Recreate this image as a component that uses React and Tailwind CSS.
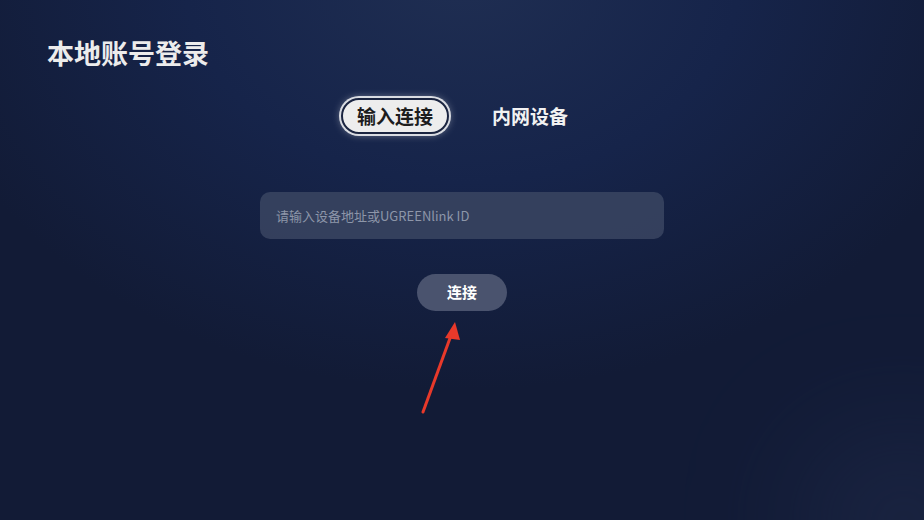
import React from "react";

const font = { fontFamily: '"Noto Sans CJK SC", "Noto Sans", sans-serif' };

function Arrow() {
  return (
    <svg className="absolute left-[415px] top-[318px]" width="50" height="100" viewBox="0 0 50 100">
      <line x1="8" y1="94" x2="38" y2="12" stroke="#e8392a" strokeWidth="3" strokeLinecap="round" />
      <polygon points="40,4 30,20 45,22" fill="#e8392a" />
    </svg>
  );
}

export default function App() {
  return (
    <div
      className="relative w-[924px] h-[520px] overflow-hidden bg-[#101a30] bg-[radial-gradient(ellipse_60%_80%_at_50%_-5%,#1f2e52_0%,#16244a_50%,#121b36_100%)]"
      style={font}
    >
      {/* soft glow in the lower right corner */}
      <div className="absolute right-[-80px] bottom-[-80px] w-[200px] h-[160px] rounded-full bg-[#2a3658] opacity-40 blur-3xl" />

      <div className="relative flex flex-col">
        <h1 className="pl-[47px] pt-[35px] text-[27px] leading-[36px] font-bold text-[#ececec]">本地账号登录</h1>

        {/* tabs */}
        <div className="mt-[27px] flex items-center justify-center gap-[43px] pr-[15px]">
          <div className="h-[36px] w-[108px] rounded-full bg-[#ededed] border-2 border-[#1a2440] ring-2 ring-white/80 shadow-[0_0_8px_rgba(255,255,255,0.5)] flex items-center justify-center text-[19px] font-bold text-[#1d1d1d]">
            输入连接
          </div>
          <div className="text-[19px] font-bold text-[#f2f2f2]">内网设备</div>
        </div>

        {/* address input */}
        <div className="mt-[58px] flex justify-center">
          <div className="w-[404px] h-[47px] rounded-[10px] bg-[#3a4562]/85 flex items-center pl-[16px] text-[13px] text-[#8d96a9]">
            请输入设备地址或UGREENlink ID
          </div>
        </div>

        <div className="mt-[35px] flex justify-center">
          <div className="w-[90px] h-[37px] rounded-full bg-[#4a536e] flex items-center justify-center text-[15px] font-bold text-white">
            连接
          </div>
        </div>
      </div>

      <Arrow />
    </div>
  );
}
